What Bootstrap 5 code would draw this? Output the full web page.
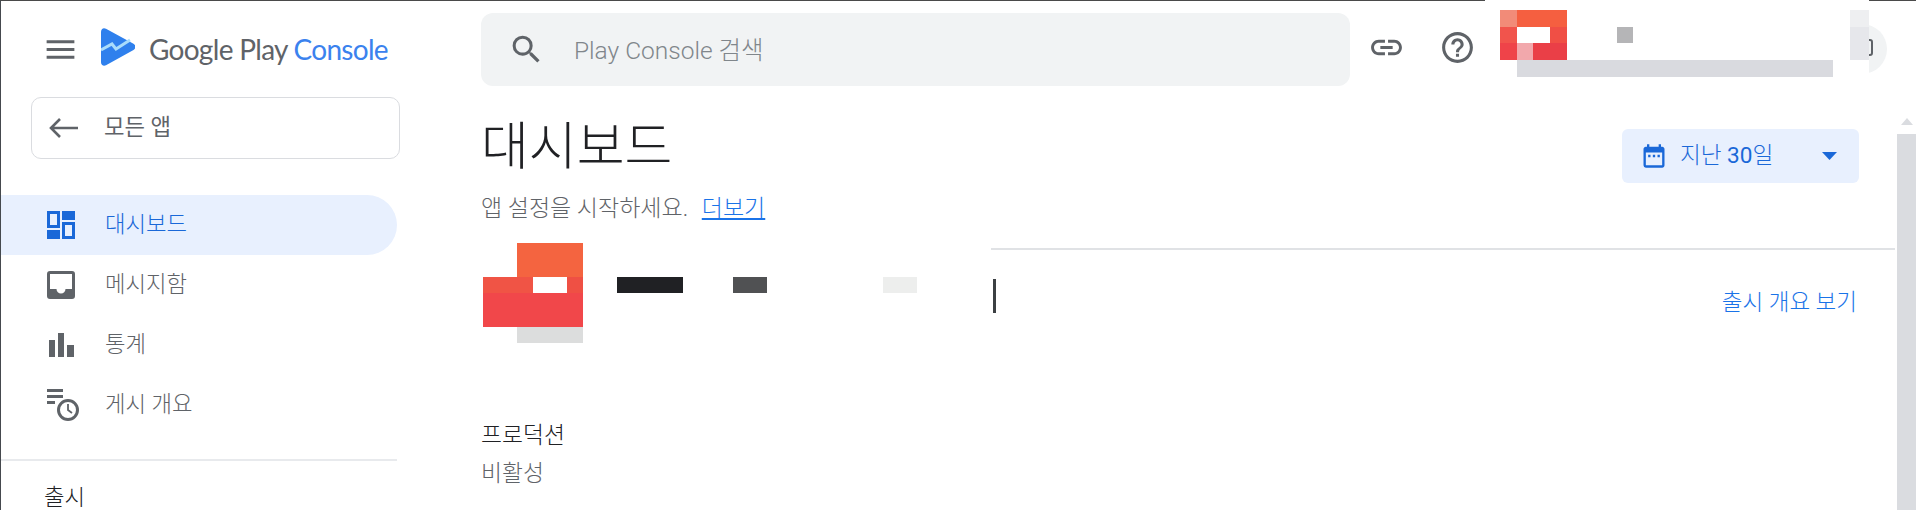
<!DOCTYPE html>
<html lang="ko">
<head>
    <meta charset="UTF-8">
    <title>대시보드 | Google Play Console</title>
    <meta name="viewport" content="width=device-width, initial-scale=1">
    <link href="https://cdn.jsdelivr.net/npm/bootstrap@5.3.3/dist/css/bootstrap.min.css" rel="stylesheet">
    <style>
        html, body { height: 510px; overflow: hidden; }
        body { font-family: Roboto, "Noto Sans CJK KR", sans-serif; font-weight: 300; color: #5f6368; background: #fff; border-top: 1px solid #4a4a4a; border-left: 1px solid #45494e; }
        svg { display: block; flex: none; fill: currentColor; }
        a { color: #1a73e8; }

        .side { width: 400px; flex: none; }
        .brand-row { height: 96px; padding-left: 41px; }
        .brand-logo { margin-left: 22px; margin-top: -4px; }
        .brand-name { font-family: Lato, sans-serif; font-size: 28px; font-weight: 400; letter-spacing: -.7px; margin-left: 14px; color: #5f6368; }
        .brand-name span { color: #3b82ee; }
        .back-btn { height: 62px; margin-left: 30px; width: 369px; border: 1px solid #dadce0; border-radius: 10px; padding: 0 0 0 17px; font-size: 22.300px; color: #5f6368; gap: 26px; background: #fff; }
        .side-nav { margin-top: 36px; width: 396px; }
        .side-nav .nav-link { height: 60px; padding: 0 0 0 46px; gap: 30px; font-size: 22.300px; color: #5f6368; border-radius: 0 30px 30px 0; }
        .side-nav .nav-link.active { background: #e8f0fe; color: #1a68d8; }
        .nav-ico { width: 28px; }
        .nav-ico-wide { width: 33px; margin-right: -5px; }
        .side-rule { width: 396px; margin: 24px 0 0; border-top: 2px solid #e8eaed; opacity: 1; }
        .side-head { padding: 22px 0 0 43px; font-size: 22.300px; color: #202124; line-height: 28px; }

        .main-col { padding-left: 80px; min-width: 0; }
        .top-row { padding-top: 12px; height: 85px; }
        .search-box { width: 869px; height: 73px; background: #f1f3f4; border-radius: 12px; padding-left: 27px; gap: 29px; font-size: 24.500px; font-weight: 300; color: #80868b; }
        .search-box svg { color: #5f6368; }
        .search-hint { padding-top: 3px; }
        .top-icons { color: #5f6368; margin: 16px 0 0 18px; gap: 34px; }
        .avatar { width: 50px; height: 50px; margin: 11px 10px 0 auto; border-radius: 50%; background: #f1f3f4; color: #5f6368; padding: 15px 0 0 14px; }
        .page-head { padding-right: 38px; }
        .page-title { font-size: 52px; font-weight: 300; line-height: 64px; margin: 30px 0 0; color: #202124; }
        .page-sub { font-size: 23px; margin: 15px 0 0; line-height: 28px; }
        .page-sub a { margin-left: 8px; }
        .date-btn { width: 237px; height: 54px; margin-top: 43px; border: 0; border-radius: 6px; background: #e8f0fe; color: #1a68d8; font-size: 22.600px; font-weight: 300; padding: 0 22px 0 18px; gap: 12px; }
        .head-rule { margin: 25px 2px 0 0; border-top: 2px solid #e0e2e5; opacity: 1; }
        .app-row { height: 94px; padding-right: 40px; }
        .caret-bar { width: 3px; height: 34px; background: #3c4043; margin: 29px 0 0 512px; }
        .over-link { font-size: 22.500px; text-decoration: none; margin-top: 36px; }
        .track-name { font-size: 22.800px; color: #202124; line-height: 28px; margin: 78px 0 0; }
        .track-state { font-size: 22.800px; line-height: 28px; margin: 10px 0 0; }

        .scroll-col { width: 19px; flex: none; padding-top: 117px; }
        .scroll-up { width: 0; height: 0; margin: 0 auto 9px; border: 6px solid transparent; border-top: 0; border-bottom: 7px solid #dadce0; }
        .scroll-thumb { height: 400px; background: #dadce0; }

        /* redacted bits lying over the screenshot */
        .blur-top { position: absolute; left: 1485px; top: 0; }
        .blur-app { position: absolute; left: 481px; top: 241px; }
    </style>
</head>
<body class="d-flex">
    <!-- Sidebar -->
    <aside class="side">
        <div class="brand-row d-flex align-items-center">
            <svg width="37" height="37" viewBox="0 0 24 24"><path d="M3 18h18v-2H3v2zm0-5h18v-2H3v2zm0-7v2h18V6H3z"/></svg>
            <svg class="brand-logo" width="34" height="38" viewBox="0 0 34 38">
                <path fill="#2f80ed" d="M0 4C0 .8 2.600-.8 5 .8l27.500 15c2.600 1.400 2.600 4.700 0 6.100L5 37.200c-2.400 1.300-5-.2-5-3z"/>
                <path fill="none" stroke="#a9dcfb" stroke-width="3" d="M0 22l11-6 4 5 14-9"/>
            </svg>
            <div class="brand-name">Google Play <span>Console</span></div>
        </div>
        <button class="back-btn d-flex align-items-center" type="button">
            <svg width="29" height="22" viewBox="0 0 29 22"><path fill="none" stroke="#5f6368" stroke-width="2.600" d="M29 11H3M11 2l-9 9 9 9"/></svg>
            모든 앱
        </button>
        <nav class="nav flex-column side-nav">
            <a class="nav-link active d-flex align-items-center" href="#">
                <svg class="nav-ico" width="28" height="28" viewBox="0 0 28 28"><path fill-rule="evenodd" d="M0 0h13v17H0zM3 3v11h7V3zM15 0h13v9H15zM0 19h13v9H0zM15 11h13v17H15zM18 14v11h7V14z"/></svg>
                대시보드
            </a>
            <a class="nav-link d-flex align-items-center" href="#">
                <svg class="nav-ico" width="28" height="28" viewBox="0 0 28 28"><path fill-rule="evenodd" d="M3 0h22a3 3 0 0 1 3 3v22a3 3 0 0 1-3 3H3a3 3 0 0 1-3-3V3a3 3 0 0 1 3-3zM3 3v15h6.500a4.500 4.500 0 0 0 9 0H25V3z"/></svg>
                메시지함
            </a>
            <a class="nav-link d-flex align-items-center" href="#">
                <svg class="nav-ico" width="28" height="28" viewBox="0 0 28 28"><path d="M2 9h6v17H2zM11 2h6v24h-6zM20 14h7v12h-7z"/></svg>
                통계
            </a>
            <a class="nav-link d-flex align-items-center" href="#">
                <svg class="nav-ico-wide" width="33" height="33" viewBox="0 0 33 33"><path d="M0 0h16v3H0zM0 6h16v3H0zM0 12h8v3H0z"/><circle cx="21" cy="21" r="9.500" fill="none" stroke="currentColor" stroke-width="3"/><path fill="none" stroke="currentColor" stroke-width="1.800" d="M21 15v6l4 3"/></svg>
                게시 개요
            </a>
        </nav>
        <hr class="side-rule">
        <div class="side-head">출시</div>
    </aside>

    <!-- Main -->
    <main class="main-col flex-grow-1">
        <div class="top-row d-flex align-items-start">
            <div class="search-box d-flex align-items-center">
                <svg width="37" height="37" viewBox="0 0 24 24"><path d="M15.500 14h-.79l-.28-.27A6.471 6.471 0 0 0 16 9.500 6.500 6.500 0 1 0 9.500 16c1.610 0 3.090-.59 4.230-1.570l.27.28v.79l5 4.990L20.490 19l-4.990-5zm-6 0C7.010 14 5 11.990 5 9.500S7.010 5 9.500 5 14 7.010 14 9.500 11.990 14 9.500 14z"/></svg>
                <span class="search-hint">Play Console 검색</span>
            </div>
            <div class="top-icons d-flex align-items-center">
                <svg width="37" height="37" viewBox="0 0 24 24"><path d="M3.900 12c0-1.710 1.390-3.100 3.100-3.100h4V7H7c-2.760 0-5 2.240-5 5s2.240 5 5 5h4v-1.900H7c-1.710 0-3.100-1.390-3.100-3.100zM8 13h8v-2H8v2zm9-6h-4v1.900h4c1.710 0 3.100 1.390 3.100 3.100s-1.390 3.100-3.100 3.100h-4V17h4c2.760 0 5-2.240 5-5s-2.240-5-5-5z"/></svg>
                <svg width="37" height="37" viewBox="0 0 24 24"><path d="M11 18h2v-2h-2v2zm1-16C6.480 2 2 6.480 2 12s4.480 10 10 10 10-4.480 10-10S17.520 2 12 2zm0 18c-4.410 0-8-3.590-8-8s3.590-8 8-8 8 3.590 8 8-3.590 8-8 8zm0-14c-2.210 0-4 1.790-4 4h2c0-1.100.9-2 2-2s2 .9 2 2c0 2-3 1.750-3 5h2c0-2.250 3-2.500 3-5 0-2.210-1.790-4-4-4z"/></svg>
            </div>
            <div class="avatar">
                <svg width="22" height="17" viewBox="0 0 22 17"><rect x="1" y="1" width="20" height="15" rx="2" fill="none" stroke="currentColor" stroke-width="2"/></svg>
            </div>
        </div>

        <div class="page-head d-flex justify-content-between align-items-start">
            <div>
                <h1 class="page-title">대시보드</h1>
                <p class="page-sub">앱 설정을 시작하세요. <a href="#">더보기</a></p>
            </div>
            <button class="date-btn d-flex align-items-center" type="button">
                <svg width="28" height="28" viewBox="0 0 24 24"><path d="M19 4h-1V2h-2v2H8V2H6v2H5c-1.110 0-1.990.9-1.990 2L3 20a2 2 0 0 0 2 2h14c1.100 0 2-.9 2-2V6c0-1.100-.9-2-2-2zm0 16H5V9h14v11zM7 11h2v2H7zm4 0h2v2h-2zm4 0h2v2h-2z"/></svg>
                <span>지난 <span class="fw-normal">30</span>일</span>
                <svg class="ms-auto" width="15" height="8" viewBox="0 0 15 8"><path d="M0 0h15l-7.500 8z"/></svg>
            </button>
        </div>
        <hr class="head-rule">

        <div class="app-row d-flex justify-content-between align-items-start">
            <div class="caret-bar"></div>
            <a class="over-link" href="#">출시 개요 보기</a>
        </div>

        <p class="track-name">프로덕션</p>
        <p class="track-state">비활성</p>
    </main>

    <div class="scroll-col">
        <div class="scroll-up"></div>
        <div class="scroll-thumb"></div>
    </div>

    <svg class="blur-top" width="384" height="86" viewBox="0 0 384 86" shape-rendering="crispEdges">
        <rect width="384" height="86" fill="#fff"/>
        <rect x="15" y="10" width="17" height="17" fill="#f28b78"/>
        <rect x="32" y="10" width="50" height="17" fill="#f55f40"/>
        <rect x="15" y="27" width="17" height="16" fill="#f1544c"/>
        <rect x="65" y="27" width="17" height="16" fill="#f04f45"/>
        <rect x="15" y="43" width="17" height="17" fill="#ef4349"/>
        <rect x="32" y="43" width="16" height="17" fill="#f2a8ac"/>
        <rect x="48" y="43" width="34" height="17" fill="#ea3f47"/>
        <rect x="32" y="60" width="316" height="17" fill="#d9dadf"/>
        <rect x="132" y="27" width="16" height="16" fill="#b5b5b7"/>
        <rect x="365" y="10" width="19" height="17" fill="#eeeff1"/>
        <rect x="365" y="27" width="19" height="33" fill="#e6e7eb"/>
    </svg>
    <svg class="blur-app" width="510" height="104" viewBox="0 0 510 104" shape-rendering="crispEdges">
        <rect width="510" height="104" fill="#fff"/>
        <rect x="36" y="2" width="66" height="34" fill="#f46440"/>
        <rect x="2" y="36" width="50" height="16" fill="#f05445"/>
        <rect x="86" y="36" width="16" height="16" fill="#ef5044"/>
        <rect x="2" y="52" width="100" height="34" fill="#f1474a"/>
        <rect x="36" y="86" width="66" height="16" fill="#dcdddd"/>
        <rect x="136" y="36" width="66" height="16" fill="#202124"/>
        <rect x="252" y="36" width="34" height="16" fill="#505153"/>
        <rect x="402" y="36" width="34" height="16" fill="#edeeed"/>
    </svg>

    <script src="https://cdn.jsdelivr.net/npm/bootstrap@5.3.3/dist/js/bootstrap.bundle.min.js"></script>
</body>
</html>
